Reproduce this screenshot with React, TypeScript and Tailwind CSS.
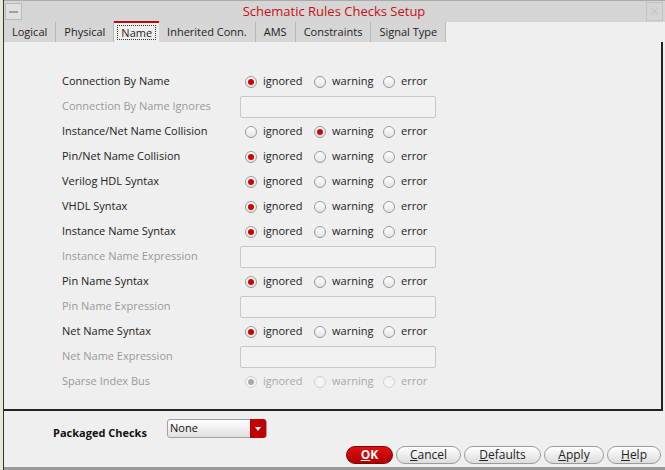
const font = { fontFamily: '"Open Sans", "Noto Sans", sans-serif' };

type Row =
  | { kind: "radio"; label: string; value: number; disabled?: boolean }
  | { kind: "input"; label: string };

const rows: Row[] = [
  { kind: "radio", label: "Connection By Name", value: 0 },
  { kind: "input", label: "Connection By Name Ignores" },
  { kind: "radio", label: "Instance/Net Name Collision", value: 1 },
  { kind: "radio", label: "Pin/Net Name Collision", value: 0 },
  { kind: "radio", label: "Verilog HDL Syntax", value: 0 },
  { kind: "radio", label: "VHDL Syntax", value: 0 },
  { kind: "radio", label: "Instance Name Syntax", value: 0 },
  { kind: "input", label: "Instance Name Expression" },
  { kind: "radio", label: "Pin Name Syntax", value: 0 },
  { kind: "input", label: "Pin Name Expression" },
  { kind: "radio", label: "Net Name Syntax", value: 0 },
  { kind: "input", label: "Net Name Expression" },
  { kind: "radio", label: "Sparse Index Bus", value: 0, disabled: true },
];

const tabs = ["Logical", "Physical", "Name", "Inherited Conn.", "AMS", "Constraints", "Signal Type"];

function Radio({ on, disabled }: { on: boolean; disabled?: boolean }) {
  return (
    <span
      className={
        "flex h-[12px] w-[12px] items-center justify-center rounded-full border " +
        (disabled ? "border-[#d0d0d0] bg-[#f4f4f4]" : "border-[#9a9a9a] bg-gradient-to-b from-[#ffffff] to-[#e4e4e4]")
      }
    >
      {on && <span className={"h-[6px] w-[6px] rounded-full " + (disabled ? "bg-[#a8a8a8]" : "bg-[#d00000]")} />}
    </span>
  );
}

function RadioGroup({ value, disabled }: { value: number; disabled?: boolean }) {
  const opts = ["ignored", "warning", "error"];
  return (
    <div className="flex pl-[5px]">
      {opts.map((o, i) => (
        <div key={o} className="flex w-[69px] items-center gap-[6px]">
          <Radio on={value === i} disabled={disabled} />
          <span className={disabled ? "text-[#a8a8a8]" : "text-[#222]"}>{o}</span>
        </div>
      ))}
    </div>
  );
}

function Btn({ u, rest, w, primary }: { u: string; rest: string; w: string; primary?: boolean }) {
  return (
    <button
      className={
        "flex h-[18px] items-center justify-center rounded-full border text-[12px] " +
        w +
        (primary
          ? " border-[#8a0000] bg-gradient-to-b from-[#e01010] to-[#b00000] font-bold text-white"
          : " border-[#9c9c9c] bg-gradient-to-b from-[#ffffff] to-[#dcdcdc] text-[#222]")
      }
    >
      <span className="underline">{u}</span>
      {rest}
    </button>
  );
}

export default function App() {
  return (
    <div style={font} className="flex h-[470px] w-[665px] bg-[#efefef] text-[11px] text-[#222]">
      {/* desktop bleed + left frame */}
      <div className="w-[3px] bg-[#e8e8d8]" />
      <div className="flex flex-1 flex-col border-l border-[#333]">
        {/* Title bar */}
        <div className="flex h-[22px] items-center border-t border-[#aaa] bg-[#d5d5d5] pl-[1px] pr-[2px]">
          <div className="flex h-[17px] w-[17px] items-center justify-center border border-[#bbb] bg-[#e0e0e0]">
            <span className="h-[2px] w-[9px] bg-[#a0a0a0]" />
          </div>
          <div className="flex-1 text-center text-[13px] text-[#c81010]">Schematic Rules Checks Setup</div>
          <div className="flex h-[19px] w-[17px] items-center justify-center border border-[#c4c4c4] text-[13px] text-[#c8c8c8]">
            ✕
          </div>
        </div>

        {/* Tabs */}
        <div className="flex h-[20px] items-end bg-[#efefef]">
          {tabs.map((t) =>
            t === "Name" ? (
              <div key={t} className="flex h-[21px] items-center border-t-2 border-[#b01010] bg-[#efefef] px-[3px]">
                <span className="border border-dotted border-[#333] px-[3px] leading-[13px]">{t}</span>
              </div>
            ) : (
              <div key={t} className="flex h-[20px] items-center border-r border-[#b8b8b8] bg-[#d6d6d6] px-[8px]">
                {t}
              </div>
            )
          )}
        </div>

        {/* Main panel */}
        <div className="mr-[2px] flex h-[369px] flex-col border-b-2 border-r-2 border-[#222] pt-[27px]">
          {rows.map((r) => (
            <div key={r.label} className="flex h-[25px] items-center">
              <div
                className={
                  "w-[236px] pl-[58px] " +
                  (r.kind === "input" || (r.kind === "radio" && r.disabled) ? "text-[#9a9a9a]" : "text-[#222]")
                }
              >
                {r.label}
              </div>
              {r.kind === "radio" ? (
                <RadioGroup value={r.value} disabled={r.disabled} />
              ) : (
                <div className="h-[22px] w-[196px] rounded-[2px] border border-[#c8c8c8] bg-[#f2f2f2]" />
              )}
            </div>
          ))}
        </div>

        {/* Packaged checks */}
        <div className="flex flex-1 flex-col">
          <div className="flex items-start pt-[8px]">
            <div className="mt-[6px] w-[163px] pl-[49px] font-bold text-[#111]">Packaged Checks</div>
            <div className="flex h-[19px] w-[100px] items-center justify-between rounded-[3px] border border-[#a0a0a0] bg-gradient-to-b from-[#ffffff] to-[#e0e0e0] pl-[2px]">
              <span className="text-[11px] text-[#111]">None</span>
              <span className="flex h-[19px] w-[16px] items-center justify-center rounded-r-[3px] bg-[#c00000]">
                <span className="h-0 w-0 border-x-[3px] border-t-[4px] border-x-transparent border-t-white" />
              </span>
            </div>
          </div>
          <div className="mt-auto flex justify-end gap-[3px] pb-[3px] pr-[4px]">
            <Btn u="O" rest="K" w="w-[47px]" primary />
            <Btn u="C" rest="ancel" w="w-[65px]" />
            <Btn u="D" rest="efaults" w="w-[77px]" />
            <Btn u="A" rest="pply" w="w-[60px]" />
            <Btn u="H" rest="elp" w="w-[54px]" />
          </div>
        </div>
        <div className="h-[3px] bg-[#9a9a9a]" />
      </div>
    </div>
  );
}
